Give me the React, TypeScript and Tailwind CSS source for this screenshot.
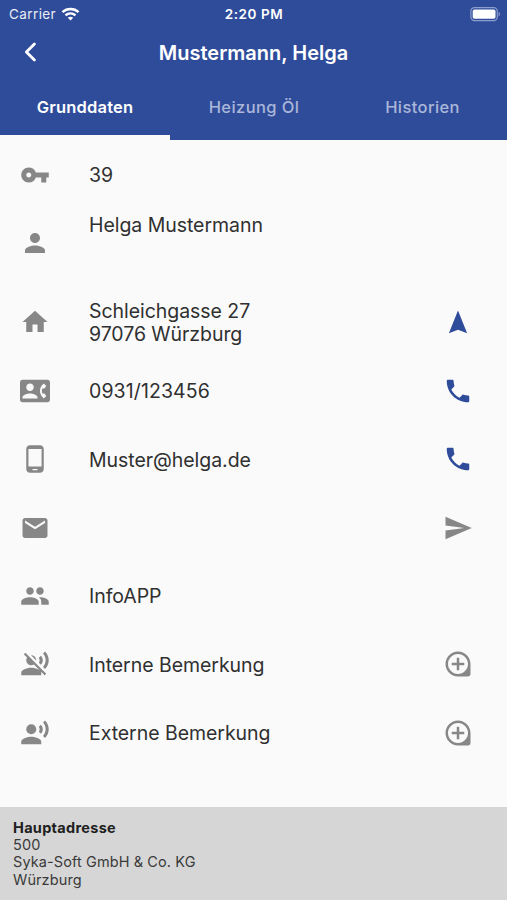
import type { ReactNode } from 'react';
import {
  MdContactPhone,
  MdEmail,
  MdHome,
  MdLoupe,
  MdPeople,
  MdPerson,
  MdPhoneAndroid,
  MdRecordVoiceOver,
  MdSend,
  MdVoiceOverOff,
  MdVpnKey,
} from 'react-icons/md';

type Icon = (props: { className?: string }) => ReactNode;

function NavigateIcon({ className }: { className?: string }) {
  return (
    <svg className={className} viewBox="0 0 24 24" fill="currentColor">
      <path d="M12 2.8 19.3 21 12 18.2 4.7 21z" />
    </svg>
  );
}

function CallIcon({ className }: { className?: string }) {
  return (
    <svg className={className} viewBox="0 0 24 24" fill="currentColor">
      <path d="M6.62 10.79c1.44 2.83 3.76 5.14 6.59 6.59l2.2-2.2c.27-.27.67-.36 1.02-.24 1.12.37 2.33.57 3.57.57.55 0 1 .45 1 1V20c0 .55-.45 1-1 1-9.39 0-17-7.61-17-17 0-.55.45-1 1-1h3.5c.55 0 1 .45 1 1 0 1.25.2 2.45.57 3.57.11.35.03.74-.25 1.02l-2.2 2.2z" />
    </svg>
  );
}

function StatusBar() {
  return (
    <div className="grid h-7 grid-cols-3 items-center text-[13.5px] text-white">
      <div className="flex items-center pl-[9px]">
        <span className="tracking-[0.4px] text-white/90">Carrier</span>
        <svg className="ml-[5px] h-[14px] w-[19px]" viewBox="0 0 18 14" fill="none" stroke="white" strokeWidth="2.5">
          <path d="M1 5.1C5.5.9 12.5.9 17 5.1" />
          <path d="M4 8.4c2.9-2.6 7.1-2.6 10 0" />
          <path d="M6.3 10.7c1.6-1.3 3.8-1.3 5.4 0L9 13.6z" fill="white" stroke="none" />
        </svg>
      </div>
      <span className="pl-px text-center font-semibold tracking-[0.55px]">2:20 PM</span>
      <svg className="mr-[6px] h-[15px] w-[31px] justify-self-end" viewBox="0 0 31 15">
        <rect x="0.9" y="0.6" width="26.4" height="13" rx="3.6" fill="none" stroke="#8d9dcd" strokeWidth="1.2" />
        <rect x="2.7" y="2.4" width="22.8" height="9.4" rx="1.8" fill="white" />
        <path d="M28.6 4.8c1.8.8 1.8 3.8 0 4.6z" fill="#8d9dcd" />
      </svg>
    </div>
  );
}

function Header() {
  return (
    <header className="h-[140px] bg-[#2f4c9b]">
      <StatusBar />
      <div className="grid h-12 grid-cols-[60px_1fr_60px] items-center">
        <svg className="ml-6 h-5 w-3" viewBox="0 0 12 20" fill="none" stroke="white" strokeWidth="2.8" strokeLinecap="round" strokeLinejoin="round">
          <path d="M10.4 2 2.4 10l8 8" />
        </svg>
        <h1 className="pt-px text-center text-[20px] font-semibold text-white">Mustermann, Helga</h1>
      </div>
      <nav className="grid h-16 grid-cols-[170px_168px_169px] text-center text-[16.5px] font-medium leading-[62px] tracking-[0.4px]">
        <span className="h-16 border-b-[5px] border-[#fafafa] font-semibold tracking-[0.2px] text-white">Grunddaten</span>
        <span className="text-[#abb7d9]">Heizung Öl</span>
        <span className="text-[#abb7d9]">Historien</span>
      </nav>
    </header>
  );
}

interface RowProps {
  icon: Icon;
  action?: Icon;
  primary?: boolean;
  children?: ReactNode;
}

function Row({ icon: Icon, action: Action, primary, children }: RowProps) {
  return (
    <div className="flex h-[68.4px] items-center pl-5 pr-[34px]">
      <Icon className="size-[30px] text-[#878787]" />
      <div className="ml-[39px] flex-1 pt-[2px] text-[19.5px] leading-[23.5px] tracking-[-0.05px] text-[#303030]">{children}</div>
      {Action && <Action className={primary ? 'size-[30px] text-[#2f4c9b]' : 'size-[30px] text-[#878787]'} />}
    </div>
  );
}

export default function App() {
  return (
    <div className="flex h-[900px] w-[507px] flex-col overflow-hidden bg-[#fafafa] font-['Inter',sans-serif]">
      <Header />
      <main className="flex-1 pt-[0.5px]">
        <Row icon={MdVpnKey}>39</Row>
        <div className="mb-[11px]">
          <Row icon={MdPerson}>
            <p className="pb-9">Helga Mustermann</p>
          </Row>
        </div>
        <Row icon={MdHome} action={NavigateIcon} primary>
          <p>Schleichgasse 27</p>
          <p>97076 Würzburg</p>
        </Row>
        <Row icon={MdContactPhone} action={CallIcon} primary>
          <span className="tracking-[0.1px]">0931/123456</span>
        </Row>
        <Row icon={MdPhoneAndroid} action={CallIcon} primary>Muster@helga.de</Row>
        <Row icon={MdEmail} action={MdSend} />
        <Row icon={MdPeople}>InfoAPP</Row>
        <Row icon={MdVoiceOverOff} action={MdLoupe}>Interne Bemerkung</Row>
        <Row icon={MdRecordVoiceOver} action={MdLoupe}>Externe Bemerkung</Row>
      </main>
      <footer className="h-[93px] bg-[#d6d6d6] pl-[13px] pt-3 text-[14.5px] leading-[17.2px] tracking-[0.1px] text-[#3a3a3a]">
        <p className="font-bold tracking-[0.3px] text-[#202020]">Hauptadresse</p>
        <p>500</p>
        <p>Syka-Soft GmbH &amp; Co. KG</p>
        <p>Würzburg</p>
      </footer>
    </div>
  );
}
